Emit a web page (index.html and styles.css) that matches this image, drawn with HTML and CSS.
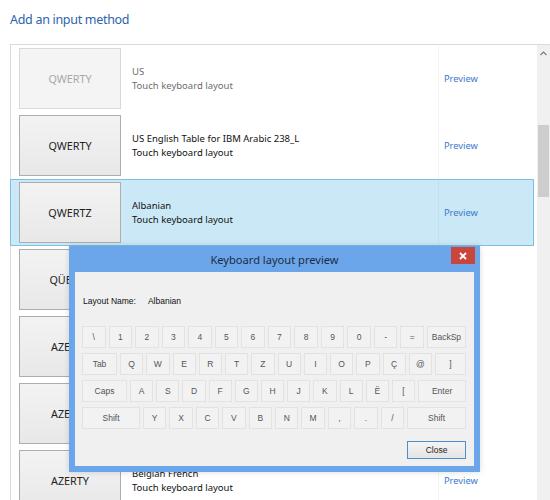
FILE: index.html
```html
<!DOCTYPE html>
<html lang="en">
<head>
    <meta charset="UTF-8">
    <title>Add an input method</title>
    <link rel="stylesheet" href="styles.css">
</head>
<body>
    <div class="page">
        <h1 class="heading">Add an input method</h1>

        <div class="listbox">
            <div class="rows">
                <div class="row disabled">
                    <div class="layout-btn">QWERTY</div>
                    <div class="name"><div>US</div><div>Touch keyboard layout</div></div>
                    <div class="link"><a href="#">Preview</a></div>
                </div>
                <div class="row">
                    <div class="layout-btn">QWERTY</div>
                    <div class="name"><div>US English Table for IBM Arabic 238_L</div><div>Touch keyboard layout</div></div>
                    <div class="link"><a href="#">Preview</a></div>
                </div>
                <div class="row selected">
                    <div class="layout-btn">QWERTZ</div>
                    <div class="name"><div>Albanian</div><div>Touch keyboard layout</div></div>
                    <div class="link"><a href="#">Preview</a></div>
                </div>
                <!-- these three sit under the preview window -->
                <div class="row">
                    <div class="layout-btn">QÜERTY</div>
                    <div class="name"></div>
                    <div class="link"></div>
                </div>
                <div class="row">
                    <div class="layout-btn">AZERTY</div>
                    <div class="name"></div>
                    <div class="link"></div>
                </div>
                <div class="row">
                    <div class="layout-btn">AZERTY</div>
                    <div class="name"></div>
                    <div class="link"></div>
                </div>
                <div class="row">
                    <div class="layout-btn">AZERTY</div>
                    <div class="name"><div>Belgian French</div><div>Touch keyboard layout</div></div>
                    <div class="link"><a href="#">Preview</a></div>
                </div>
            </div>
            <div class="scrollbar">
                <svg class="arrow" width="7" height="5" viewBox="0 0 7 5">
                    <path d="M0.5 4 L3.5 1 L6.5 4" fill="none" stroke="#7a7a7a" stroke-width="1.2"/>
                </svg>
                <div class="thumb"></div>
            </div>
        </div>

        <!-- preview window, on top of the list -->
        <div class="dialog">
            <div class="titlebar">
                <span class="title">Keyboard layout preview</span>
                <div class="close-x">
                    <svg width="8" height="8" viewBox="0 0 8 8">
                        <path d="M1 1 L7 7 M7 1 L1 7" stroke="#fff" stroke-width="1.8"/>
                    </svg>
                </div>
            </div>
            <div class="content">
                <div class="layout-name"><span>Layout Name:</span><span>Albanian</span></div>
                <div class="keyboard">
                    <div class="key-row">
                        <div class="key">\</div><div class="key">1</div><div class="key">2</div><div class="key">3</div><div class="key">4</div><div class="key">5</div><div class="key">6</div><div class="key">7</div><div class="key">8</div><div class="key">9</div><div class="key">0</div><div class="key">-</div><div class="key">=</div><div class="key backsp">BackSp</div>
                    </div>
                    <div class="key-row">
                        <div class="key tab">Tab</div><div class="key">Q</div><div class="key">W</div><div class="key">E</div><div class="key">R</div><div class="key">T</div><div class="key">Z</div><div class="key">U</div><div class="key">I</div><div class="key">O</div><div class="key">P</div><div class="key">Ç</div><div class="key">@</div><div class="key bracket">]</div>
                    </div>
                    <div class="key-row">
                        <div class="key caps">Caps</div><div class="key">A</div><div class="key">S</div><div class="key">D</div><div class="key">F</div><div class="key">G</div><div class="key">H</div><div class="key">J</div><div class="key">K</div><div class="key">L</div><div class="key">Ë</div><div class="key">[</div><div class="key enter">Enter</div>
                    </div>
                    <div class="key-row">
                        <div class="key shift">Shift</div><div class="key">Y</div><div class="key">X</div><div class="key">C</div><div class="key">V</div><div class="key">B</div><div class="key">N</div><div class="key">M</div><div class="key">,</div><div class="key">.</div><div class="key">/</div><div class="key shift-r">Shift</div>
                    </div>
                </div>
                <div class="buttons">
                    <button class="close-btn">Close</button>
                </div>
            </div>
        </div>
    </div>
</body>
</html>
```

FILE: styles.css
```css
body {
    margin: 0;
    background-color: #fff;
    font-family: "Noto Sans", "Open Sans", sans-serif;
    overflow: hidden;
}
.page {
    position: relative;
    width: 550px;
    height: 500px;
    overflow: hidden;
}
.heading {
    margin: 0;
    padding: 11px 0 0 10px;
    height: 44px;
    box-sizing: border-box;
    font-size: 12.5px;
    letter-spacing: -0.3px;
    font-weight: normal;
    color: #2d62ad;
}
.listbox {
    display: flex;
    margin-left: 10px;
    height: 456px;
    border-top: 1px solid #dadada;
    border-left: 1px solid #dadada;
}
.rows {
    width: 523px;
}
.row {
    display: flex;
    align-items: center;
    height: 67px;
    box-sizing: border-box;
    margin-left: -1px;
    padding: 2px 0 2px 8px;
    border: 1px solid transparent;
}
.row.selected {
    background-color: #cbe8f6;
    border-color: #7cc0e2;
}
.layout-btn {
    flex: none;
    width: 102px;
    height: 61px;
    box-sizing: border-box;
    display: flex;
    align-items: center;
    justify-content: center;
    border: 1px solid #adadad;
    background: linear-gradient(#f3f3f3, #e8e8e8);
    font-size: 10.8px;
    color: #222;
}
.row.disabled .layout-btn {
    border-color: #d9d9d9;
    background: #f4f4f4;
    color: #a8a8a8;
}
.name {
    flex: none;
    width: 306px;
    margin-left: 11px;
    font-size: 9.5px;
    line-height: 14px;
    color: #111;
}
.row.disabled .name {
    color: #6d6d6d;
}
.link {
    align-self: stretch;
    display: flex;
    align-items: center;
    margin: -2px 0;
    padding-left: 5px;
    border-left: 1px solid #f4f4f4;
}
.row.selected .link {
    border-left-color: #c2e0ef;
}
.link a {
    font-size: 9.3px;
    color: #3b78cc;
    text-decoration: none;
}
.scrollbar {
    width: 13px;
    margin-left: 3px;
    background-color: #f0f0f0;
    display: flex;
    flex-direction: column;
    align-items: center;
}
.arrow {
    margin-top: 6px;
}
.thumb {
    width: 11px;
    height: 72px;
    margin-top: 69px;
    background-color: #cdcdcd;
}

/* preview window */
.dialog {
    position: absolute;
    left: 69px;
    top: 246px;
    width: 411px;
    height: 226px;
    box-sizing: border-box;
    background-color: #6ca6ea;
    padding: 0 6px 6px 6px;
    display: flex;
    flex-direction: column;
    box-shadow: 0 0 6px rgba(0,0,0,0.15);
}
.titlebar {
    position: relative;
    height: 26px;
    flex: none;
    display: flex;
    align-items: center;
    justify-content: center;
}
.title {
    font-size: 11.1px;
    color: #1c2c44;
}
.close-x {
    position: absolute;
    top: 1px;
    right: -1px;
    width: 24px;
    height: 17px;
    background-color: #c9463f;
    display: flex;
    align-items: center;
    justify-content: center;
}
.content {
    flex: 1;
    background-color: #f0f0f0;
    padding: 0 8px 7px 7px;
    display: flex;
    flex-direction: column;
    font-family: "Liberation Sans", Arial, sans-serif;
    font-size: 8.5px;
}
.layout-name {
    display: flex;
    gap: 12px;
    margin-top: 24px;
    height: 11px;
    padding-left: 1px;
    color: #111;
}
.keyboard {
    margin-top: 19px;
}
.key-row {
    display: flex;
    gap: 3px;
    margin-bottom: 5px;
}
.key {
    flex: 1 1 0;
    height: 22px;
    box-sizing: border-box;
    display: flex;
    align-items: center;
    justify-content: center;
    border: 1px solid #e2e2e2;
    background-color: #f2f2f2;
    color: #555;
}
.key.backsp { flex: none; width: 39px; }
.key.tab { flex: none; width: 35px; }
.key.bracket { flex: none; width: 31px; }
.key.caps { flex: none; width: 45px; }
.key.enter { flex: none; width: 48px; }
.key.shift { flex: none; width: 58px; }
.key.shift-r { flex: none; width: 59px; }
.buttons {
    display: flex;
    justify-content: flex-end;
    margin-top: auto;
}
.close-btn {
    width: 59px;
    height: 18px;
    padding: 0;
    border: 1px solid #4c8fca;
    background: linear-gradient(#f4f4f4, #e4e4e4);
    font-family: "Liberation Sans", Arial, sans-serif;
    font-size: 8.5px;
    color: #222;
}
```
